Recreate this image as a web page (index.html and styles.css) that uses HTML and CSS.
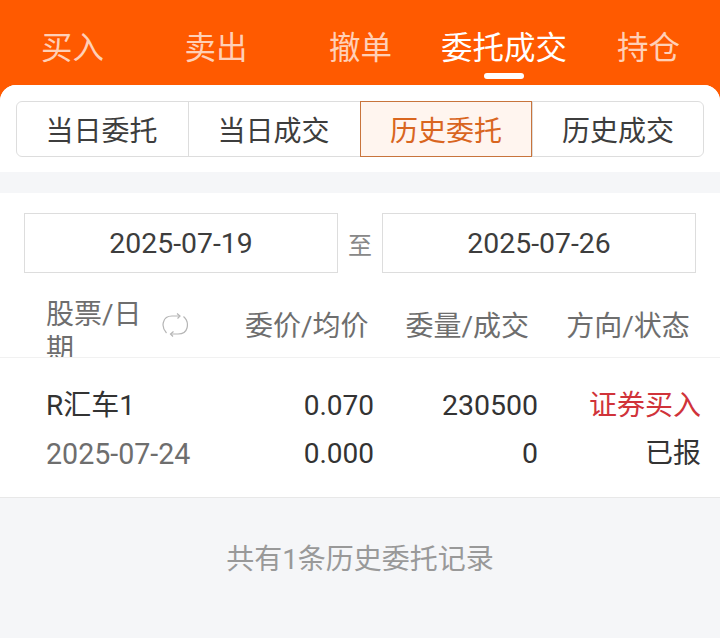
FILE: index.html
```html
<!DOCTYPE html>
<html lang="zh-CN">
<head>
	<meta charset="UTF-8">
	<title>委托成交</title>
	<link rel="stylesheet" href="styles.css">
</head>
<body>
	<div class="top_nav">
		<span class="nav_item nav_buy">买入</span>
		<span class="nav_item nav_sell">卖出</span>
		<span class="nav_item nav_cancel">撤单</span>
		<span class="nav_item nav_deal on">委托成交</span>
		<span class="nav_item nav_hold">持仓</span>
	</div>
	<div class="sheet">
		<div class="seg_wrap">
			<div class="seg">
				<span class="seg_btn">当日委托</span>
				<span class="seg_btn">当日成交</span>
				<span class="seg_btn on">历史委托</span>
				<span class="seg_btn">历史成交</span>
			</div>
		</div>
		<div class="band"></div>
		<div class="panel">
			<div class="date_row">
				<div class="date_box">2025-07-19</div>
				<span class="date_to">至</span>
				<div class="date_box">2025-07-26</div>
			</div>
			<div class="list_head">
				<div class="head_name">股票/日期</div>
				<svg class="head_icon" viewBox="0 0 26 26" width="26" height="26" fill="none" stroke="#b5b5b5" stroke-width="1.2">
					<path d="M4.5 21 C1 17 .5 13 1.5 10 C2.5 6 6 4 10 4 L17 4"/>
					<path d="M15 1.5 L18 4 L15.5 6.5"/>
					<path d="M21.5 4.5 C25 7.5 26 12 25 16 C24 20 20 22 16 22 L9 22"/>
					<path d="M11.5 19.5 L8.5 22 L11 24.5"/>
				</svg>
				<div class="head_col col_price">委价/均价</div>
				<div class="head_col col_vol">委量/成交</div>
				<div class="head_col col_dir">方向/状态</div>
			</div>
		</div>
		<div class="list_row">
			<div class="cell_name">
				<div class="stock_name">R汇车1</div>
				<div class="stock_date">2025-07-24</div>
			</div>
			<div class="cell_num">
				<div>0.070</div>
				<div>0.000</div>
			</div>
			<div class="cell_num">
				<div class="digits">230500</div>
				<div class="digits">0</div>
			</div>
			<div class="cell_num cell_last">
				<div class="red">证券买入</div>
				<div>已报</div>
			</div>
		</div>
		<div class="list_foot">共有1条历史委托记录</div>
	</div>
</body>
</html>
```

FILE: styles.css
```css
*{box-sizing:border-box;}
html,body{margin:0;padding:0;}
body{width:720px;height:638px;overflow:hidden;background:#ff5a00;font-family:Roboto,"Noto Sans CJK SC",sans-serif;color:#333;}

.top_nav{display:flex;height:85px;padding-top:27px;}
.nav_item{position:relative;font-size:31.5px;line-height:44px;color:rgba(255,255,255,.72);white-space:nowrap;}
.nav_buy{margin-left:41px;}
.nav_sell{margin-left:80.5px;}
.nav_cancel{margin-left:81.5px;}
.nav_deal{margin-left:49px;color:#fff;}
.nav_hold{margin-left:50px;}
.nav_item.on:after{content:"";position:absolute;left:43px;bottom:6px;width:40px;height:6px;border-radius:3px;background:#fff;}

.sheet{height:553px;border-radius:16px 16px 0 0;background:#f5f6f8;overflow:hidden;}
.seg_wrap{padding:16px 16px 15px;background:#fff;}
.seg{display:grid;grid-template-columns:171px 172px 172px 171px;height:56px;border:1px solid #ddd;border-radius:6px;background:#fff;}
.seg_btn{display:flex;align-items:center;justify-content:center;font-size:28px;color:#3d3d3d;border-left:1px solid #ddd;}
.seg_btn:first-child{border-left:0;}
.seg_btn:nth-child(-n+2){padding-right:2px;}
.seg_btn.on{margin:-1px 0;border:1px solid #c8743c;background:#fff5ef;color:#d9661f;}
.band{height:21px;}

.panel{height:165px;background:#fff;border-bottom:1px solid #f1f1f1;}
.date_row{display:flex;align-items:center;padding:20px 24px 0;}
.date_box{width:314px;height:60px;border:1px solid #ddd;text-align:center;font-size:28.4px;line-height:60px;color:#3d3d3d;}
.date_to{flex:1;text-align:center;font-size:24px;color:#888;}

.list_head{display:flex;height:84px;overflow:hidden;padding-top:24px;font-size:28px;line-height:35px;color:#6e6e6e;}
.head_name{width:116px;margin-left:46px;flex:none;}
.head_icon{flex:none;margin-top:15px;}
.head_col{flex:none;white-space:nowrap;padding-top:12px;}
.col_price{margin-left:57px;}
.col_vol{margin-left:37px;}
.col_dir{margin-left:37px;}

.list_row{display:flex;height:140px;padding:24px 19px 0 46px;background:#fff;border-bottom:1px solid #e8e8e8;font-size:28px;line-height:48px;color:#333;}
.cell_name{width:164px;flex:none;}
.stock_date{color:#6e6e6e;font-size:28.6px;}
.cell_num{width:164px;flex:none;text-align:right;}
.cell_last{width:163px;}
.digits{font-size:28.5px;}
.red{color:#d0333a;}

.list_foot{padding-top:42px;text-align:center;font-size:28px;line-height:40px;color:#999;}
```
